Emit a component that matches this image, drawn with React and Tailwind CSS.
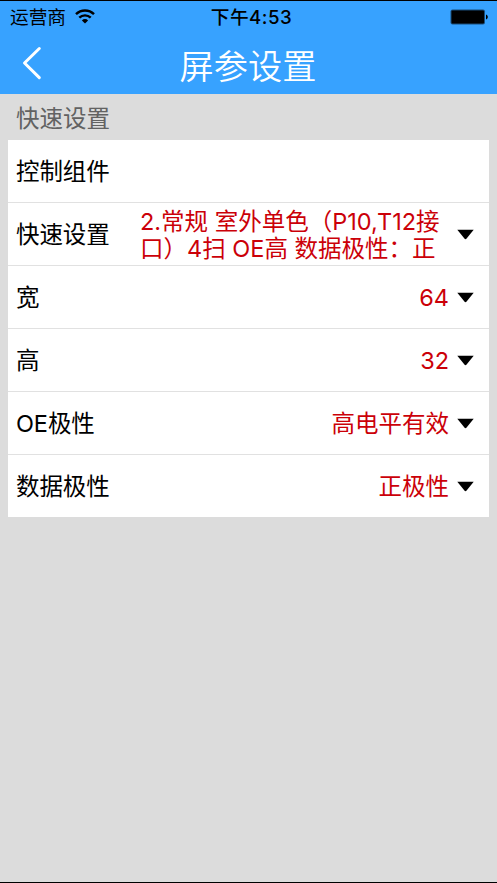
import React from 'react';

const ROWS = [
  { label: '控制组件' },
  { label: '快速设置', lines: ['2.常规 室外单色（P10,T12接', '口）4扫 OE高 数据极性：正'] },
  { label: '宽', value: '64' },
  { label: '高', value: '32' },
  { label: 'OE极性', value: '高电平有效' },
  { label: '数据极性', value: '正极性' },
];

function StatusBar() {
  return (
    <div className="grid h-[34px] grid-cols-3 items-center pr-[9px] pl-[10px] text-[18.7px] leading-none text-black">
      <div className="flex items-center gap-[9px]">
        <span className="whitespace-nowrap">运营商</span>
        <svg className="mb-[2px]" width="20" height="15" viewBox="0 0 20 15" fill="none" stroke="black" strokeWidth="2.4">
          <path d="M1 5.2a12.8 12.8 0 0 1 18 0" />
          <path d="M4.3 8.7a8.1 8.1 0 0 1 11.4 0" />
          <path d="M10 14.4 6.9 11.4a4.4 4.4 0 0 1 6.2 0Z" fill="black" stroke="none" />
        </svg>
      </div>
      <span className="pl-[5px] text-center font-medium tracking-[0.5px] whitespace-nowrap">下午4:53</span>
      <svg className="mb-[2px] justify-self-end" width="38" height="16" viewBox="0 0 38 16">
        <rect x="0.5" y="0.5" width="34.5" height="15" rx="2" fill="#1b4d78" />
        <rect x="1.5" y="1.5" width="32.5" height="13" rx="1" fill="black" />
        <path d="M36 5.5c2.4.8 2.4 4.2 0 5Z" fill="black" />
      </svg>
    </div>
  );
}

function Arrow() {
  return (
    <svg className="ml-2 shrink-0" width="17" height="11" viewBox="0 0 17 11">
      <path d="M0.3 0.8h16.4L9.6 9.6q-1.1 1.2-2.2 0Z" fill="black" />
    </svg>
  );
}

function Row({ label, value, lines }) {
  return (
    <div className="flex flex-1 items-center border-b border-[#e1e1e1] pr-[15px] pl-2 last:border-b-0">
      <span className="pt-[2px] tracking-[-0.1px] whitespace-nowrap">{label}</span>
      {value && <span className="ml-auto pt-[2px] text-[#cb0008]">{value}</span>}
      {lines && (
        <div className="ml-auto w-[309px] pt-[2px] leading-[27.5px] whitespace-nowrap text-[#cb0008]">
          {lines.map((line) => (
            <div key={line}>{line}</div>
          ))}
        </div>
      )}
      {(value || lines) && <Arrow />}
    </div>
  );
}

export default function App() {
  return (
    <div className="flex h-[883px] w-[497px] flex-col overflow-hidden border-y border-black bg-[#dcdcdc] font-['Inter','Noto_Sans_CJK_SC',sans-serif] font-[390]">
      <header className="h-[93px] shrink-0 bg-[#37a2ff]">
        <StatusBar />
        <div className="grid h-[59px] grid-cols-[60px_1fr_60px] items-center">
          <svg className="mb-1 ml-[22px]" width="20" height="34" viewBox="0 0 20 34" fill="none" stroke="white" strokeWidth="3" strokeLinecap="round" strokeLinejoin="round">
            <path d="M17.3 2.5 2.5 17l14.8 14.6" />
          </svg>
          <h1 className="pt-[5px] pr-px text-center text-[34.2px] leading-none font-[350] text-white">屏参设置</h1>
        </div>
      </header>
      <main className="px-2 text-[23.5px] leading-none">
        <h2 className="flex h-[46px] items-center pt-[3px] pl-2 text-[#626262]">快速设置</h2>
        <div className="flex h-[377px] flex-col bg-white text-black">
          {ROWS.map((row, i) => (
            <Row key={i} {...row} />
          ))}
        </div>
      </main>
    </div>
  );
}
